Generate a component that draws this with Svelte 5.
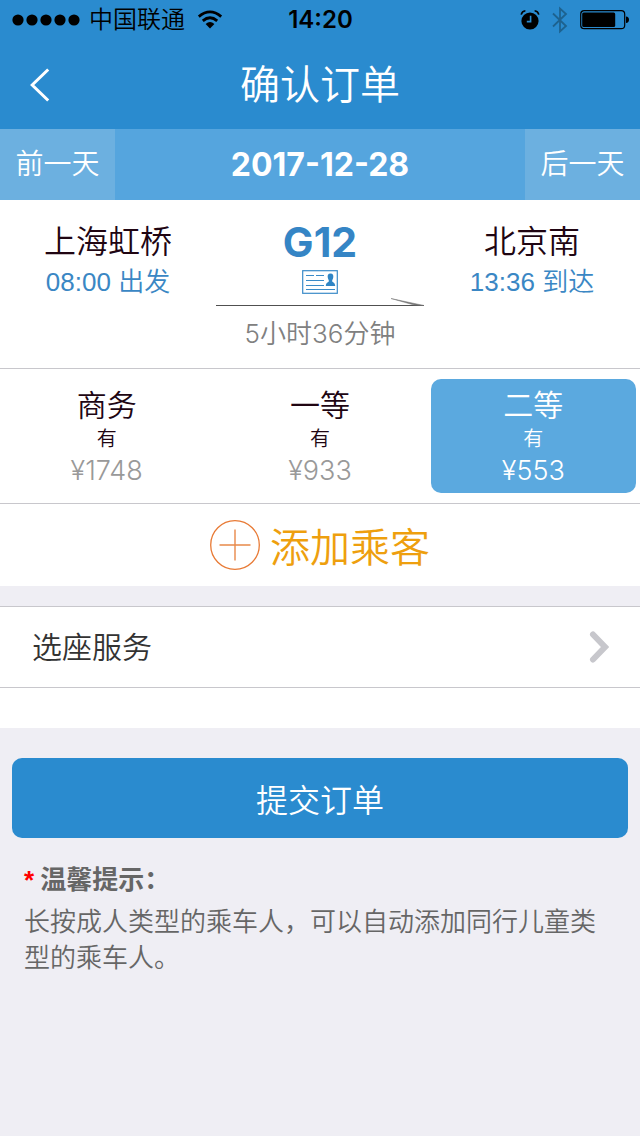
<!-- Order confirmation page -->
<script>
  let date = $state("2017-12-28");
  let selected = $state(2);

  const seats = [
    { name: "商务", left: "有", price: 1748 },
    { name: "一等", left: "有", price: 933 },
    { name: "二等", left: "有", price: 553 },
  ];

  function moveDay(n) {
    const d = new Date(date);
    d.setUTCDate(d.getUTCDate() + n);
    date = d.toISOString().slice(0, 10);
  }
</script>

<svelte:head>
  <title>确认订单</title>
</svelte:head>

<header>
  <div class="status">
    <div class="carrier">
      <svg width="68" height="12" viewBox="0 0 68 12">
        {#each [0, 1, 2, 3, 4] as i}
          <circle cx={6 + i * 14} cy="6" r="5.6" />
        {/each}
      </svg>
      <span>中国联通</span>
      <svg class="wifi" width="26" height="20" viewBox="0 0 26 20">
        <path d="M1.8 6.6Q13 -2.8 24.2 6.6M5.8 10.9Q13 4.7 20.2 10.9" fill="none" stroke="#000" stroke-width="2.8" />
        <path d="M8.6 13.9Q13 10.2 17.4 13.9L13 18.4Z" />
      </svg>
    </div>
    <span class="clock">14:20</span>
    <div class="system">
      <svg width="20" height="22" viewBox="0 0 20 22">
        <circle cx="10" cy="12" r="8.6" />
        <path d="M1.2 5.6Q2 2.2 5.4 1.8M18.8 5.6Q18 2.2 14.6 1.8" fill="none" stroke="#000" stroke-width="1.6" />
        <path d="M10.6 6.8V12.6H6.8" fill="none" stroke="#2a8bcf" stroke-width="1.6" />
      </svg>
      <svg width="16" height="28" viewBox="0 0 16 28">
        <path d="M1 7.5L14 20L8 25.5V2.5L14 8L1 20.5" fill="none" stroke="#1d628f" stroke-width="1.8" />
      </svg>
      <svg width="49" height="20" viewBox="0 0 49 20">
        <rect x=".7" y=".7" width="44" height="18" rx="3.5" fill="none" stroke="#000" stroke-width="1.2" />
        <rect x="2.2" y="2.4" width="33" height="14.6" rx="1.5" />
        <path d="M46 6.5Q49 6.8 49 9.7T46 13Z" />
      </svg>
    </div>
  </div>
  <div class="nav">
    <button type="button" class="back" aria-label="返回">
      <svg width="20" height="34" viewBox="0 0 20 34">
        <path d="M18.2 1.5L2.2 17L18.2 32.5" fill="none" stroke="#fff" stroke-width="3" />
      </svg>
    </button>
    <h1>确认订单</h1>
  </div>
</header>

<main>
  <div class="days">
    <button type="button" onclick={() => moveDay(-1)}>前一天</button>
    <strong>{date}</strong>
    <button type="button" onclick={() => moveDay(1)}>后一天</button>
  </div>

  <section class="trip">
    <div>
      <div class="station">上海虹桥</div>
      <div class="time">08:00 出发</div>
    </div>
    <div class="train">
      <div class="number">G12</div>
      <svg class="card" width="36" height="24" viewBox="0 0 36 24">
        <rect x=".7" y=".7" width="34.6" height="22.6" fill="none" stroke="#3a8bc8" stroke-width="1.2" />
        <path d="M4 5.5H12M14 5.5H22M4 10.5H22M4 15.5H22M4 19.5H33" stroke="#3a8bc8" stroke-width="1.2" />
        <path d="M28.5 3.6C31 3.6 31.7 5.5 31.2 7.8C30.9 9.4 30.2 10 30.1 11.2C31 12.6 33 12.4 33.2 16H23.8C24 12.4 26 12.6 26.9 11.2C26.8 10 26.1 9.4 25.8 7.8C25.3 5.5 26 3.6 28.5 3.6Z" fill="#2f85c5" />
      </svg>
      <svg class="arrow" width="208" height="9" viewBox="0 0 208 9">
        <path d="M0 7.5H208" stroke="#505050" stroke-width="1.2" />
        <path d="M175 .5L208 7.5L198 7Z" fill="#777" stroke="#777" stroke-width=".5" />
      </svg>
      <div class="duration">5小时36分钟</div>
    </div>
    <div>
      <div class="station">北京南</div>
      <div class="time">13:36 到达</div>
    </div>
  </section>

  <section class="seats">
    {#each seats as seat, i}
      <button type="button" class:active={selected === i} aria-pressed={selected === i} onclick={() => (selected = i)}>
        <span class="name">{seat.name}</span>
        <span class="left">{seat.left}</span>
        <span class="price">¥{seat.price}</span>
      </button>
    {/each}
  </section>

  <button type="button" class="add">
    <svg width="50" height="50" viewBox="0 0 50 50">
      <path d="M25 9.5V40.5M9.5 25H40.5" stroke="#e8894a" stroke-width="1.4" />
      <circle cx="25" cy="25" r="24.3" fill="none" stroke="#e87a35" stroke-width="1.3" />
    </svg>
    <span>添加乘客</span>
  </button>

  <section class="service">
    <a href="#seat">
      <span>选座服务</span>
      <svg width="20" height="34" viewBox="0 0 20 34">
        <path d="M4 4.5L16 17L4 29.5" fill="none" stroke="#c7c7cc" stroke-width="6" stroke-linecap="round" />
      </svg>
    </a>
  </section>

  <button type="button" class="submit">提交订单</button>

  <section class="tips">
    <h2><span>*</span>温馨提示：</h2>
    <p>长按成人类型的乘车人，可以自动添加同行儿童类型的乘车人。</p>
  </section>
</main>

<style>
  :global(body) {
    background: #efeef4;
    font-family: Inter, "Noto Sans CJK SC", sans-serif;
    font-weight: 350;
  }

  button {
    border: 0;
    padding: 0;
    background: none;
    font: inherit;
    color: inherit;
    cursor: pointer;
  }

  svg {
    display: block;
    flex: none;
  }

  h1,
  h2,
  p {
    margin: 0;
  }

  header {
    background: #2a8bcf;
  }

  .status {
    display: grid;
    grid-template-columns: 1fr auto 1fr;
    align-items: center;
    height: 40px;
    padding: 0 11px 0 12px;
    font-size: 24px;
    line-height: 40px;
  }

  .carrier,
  .system {
    display: flex;
    align-items: center;
  }

  .carrier {
    gap: 9px;
  }

  .wifi {
    margin-left: 3px;
  }

  .clock {
    font-weight: 600;
  }

  .system {
    justify-content: flex-end;
    gap: 12px;
  }

  .nav {
    display: grid;
    grid-template-columns: 80px 1fr 80px;
    align-items: center;
    height: 89px;
  }

  .back {
    display: flex;
    align-items: center;
    height: 88px;
    padding-left: 30px;
  }

  h1 {
    color: #fff;
    font-size: 40px;
    font-weight: inherit;
    line-height: 88px;
    text-align: center;
  }

  .days {
    display: grid;
    grid-template-columns: 115px 1fr 115px;
    background: #55a5de;
    color: #fff;
    line-height: 71px;
    text-align: center;
  }

  .days button {
    background: #6cb0e0;
    font-size: 28px;
  }

  .days strong {
    font-size: 32px;
    font-weight: 700;
  }

  .trip {
    display: grid;
    grid-template-columns: 1fr 208px 1fr;
    padding: 20px 0 16px;
    background: #fff;
    border-bottom: 1px solid #c8c7cc;
    text-align: center;
  }

  .station {
    color: #200512;
    font-size: 32px;
    line-height: 44px;
  }

  .time {
    color: #3a87c4;
    font-family: "Liberation Sans", "Noto Sans CJK SC", sans-serif;
    font-size: 26px;
    line-height: 36px;
  }

  .train {
    display: flex;
    flex-direction: column;
    align-items: center;
  }

  .number {
    color: #3585c5;
    font-size: 41px;
    font-weight: 700;
    line-height: 44px;
  }

  .card {
    margin: 6px 0 4px;
  }

  .duration {
    margin-top: 9px;
    color: #808080;
    font-size: 26px;
    line-height: 36px;
  }

  .seats {
    display: grid;
    grid-template-columns: repeat(3, 1fr);
    padding: 10px 0;
    background: #fff;
    border-bottom: 1px solid #c8c7cc;
  }

  .seats button {
    display: flex;
    flex-direction: column;
    align-items: center;
    margin: 0 4px;
    padding: 6px 0 4px;
    border-radius: 10px;
    color: #200512;
  }

  .name {
    font-size: 30px;
    line-height: 40px;
  }

  .left {
    font-size: 20px;
    line-height: 28px;
  }

  .price {
    color: #999;
    font-size: 27px;
    line-height: 36px;
  }

  .seats .active {
    background: #5ba9df;
    color: #fff;
  }

  .active .price {
    color: #fff;
  }

  .add {
    display: flex;
    align-items: center;
    justify-content: center;
    gap: 10px;
    width: 100%;
    height: 82px;
    background: #fff;
    color: #ee9f0e;
    font-size: 40px;
  }

  .service {
    margin-top: 20px;
    padding-bottom: 40px;
    border-top: 1px solid #c8c7cc;
    background: #fff;
  }

  .service a {
    display: flex;
    align-items: center;
    justify-content: space-between;
    padding: 0 31px 0 32px;
    border-bottom: 1px solid #c8c7cc;
    color: #333;
    font-size: 30px;
    line-height: 80px;
    text-decoration: none;
  }

  .submit {
    display: block;
    width: calc(100% - 24px);
    height: 80px;
    margin: 30px 12px 0;
    border-radius: 10px;
    background: #2a8bcf;
    color: #fff;
    font-size: 32px;
  }

  .tips {
    padding: 24px;
    color: #666;
    font-size: 26px;
    line-height: 36px;
  }

  h2 {
    margin-bottom: 6px;
    font-size: 26px;
    font-weight: 700;
  }

  h2 span {
    margin-right: 6px;
    color: #f00;
    font-family: "Liberation Sans", sans-serif;
  }
</style>
